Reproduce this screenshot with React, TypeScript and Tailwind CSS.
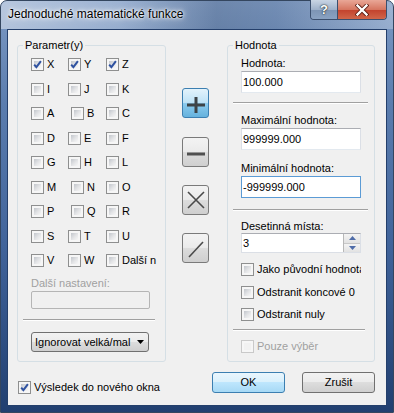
import React from 'react';

const Check = ({ checked = false, disabled = false }: { checked?: boolean; disabled?: boolean }) => (
  <span
    className={`relative flex h-[13px] w-[13px] shrink-0 border p-[2px] ${
      disabled ? 'border-[#c9c9c9] bg-[#f6f6f6]' : 'border-[#8e8f8f] bg-[#f6f6f6]'
    }`}
  >
    <span
      className={`block h-full w-full ${
        disabled ? 'bg-[#f1f1f1]' : 'bg-[linear-gradient(135deg,#c2c6cc_0%,#e4e5e7_55%,#f7f7f7_100%)]'
      }`}
    />
    {checked && (
      <svg className="absolute left-0 top-0" width="11" height="11" viewBox="0 0 11 11">
        <path d="M2.2 5.6 L4.4 8.2 L8.9 2.2" stroke="#2f52a0" strokeWidth="2" fill="none" />
      </svg>
    )}
  </span>
);

const Opt = ({ label, checked, shift }: { label: string; checked?: boolean; shift?: boolean }) => (
  <div className={`flex h-[13px] items-center gap-[3px] ${shift ? 'ml-[3px]' : ''}`}>
    <Check checked={checked} />
    <span className="whitespace-nowrap leading-[13px]">{label}</span>
  </div>
);

const TextBox = ({ value, focused }: { value: string; focused?: boolean }) => (
  <div
    className={`flex h-[22px] w-[120px] items-center border bg-white px-[1px] ${
      focused ? 'border-[#5b9bd5]' : 'border-[#dbdfe6] border-t-[#abadb3] border-b-[#e3e9ef]'
    }`}
  >
    {value}
  </div>
);

const Sep = ({ className }: { className: string }) => (
  <div className={`h-[2px] border-t border-b border-[#a0a0a0] border-b-white ${className}`} />
);

const ToolBtn = ({ hot, children }: { hot?: boolean; children: React.ReactNode }) => (
  <div
    className={`flex h-[30px] w-[27px] items-center justify-center rounded-[3px] border ${
      hot
        ? 'border-[#3c7fb1] bg-[linear-gradient(180deg,#e3f3fc_0%,#bfe3f7_48%,#8ccbee_52%,#66b2dd_100%)]'
        : 'border-[#7a7a7a] bg-[linear-gradient(180deg,#f3f3f3_0%,#ebebeb_48%,#dcdcdc_52%,#cfcfcf_100%)]'
    }`}
  >
    <svg width="27" height="30" viewBox="0 0 27 30" className="-m-px">
      {children}
    </svg>
  </div>
);

const Btn = ({ label, def }: { label: string; def?: boolean }) => (
  <div
    className={`flex h-[21px] w-[73px] items-center justify-center rounded-[3px] border ${
      def
        ? 'border-[#3c7fb1] bg-[linear-gradient(180deg,#eaf6fd_0%,#d9f0fc_50%,#bee6fd_50%,#a7d9f5_100%)]'
        : 'border-[#707070] bg-[linear-gradient(180deg,#f2f2f2_0%,#ebebeb_50%,#dddddd_50%,#cfcfcf_100%)]'
    }`}
  >
    {label}
  </div>
);

export default function App() {
  const rows: [string, boolean?, boolean?][][] = [
    [['X', true], ['Y', true], ['Z', true]],
    [['I'], ['J'], ['K']],
    [['A'], ['B', false, true], ['C']],
    [['D'], ['E'], ['F']],
    [['G'], ['H'], ['L']],
    [['M'], ['N', false, true], ['O']],
    [['P'], ['Q', false, true], ['R']],
    [['S'], ['T'], ['U']],
    [['V'], ['W'], ['Další n']],
  ];

  return (
    <div className="flex h-[413px] w-[394px] flex-col rounded-t-[7px] border border-[#34465f] bg-[linear-gradient(180deg,#7d9ac4_0%,#5b7dae_25%,#40639a_60%,#213f70_100%)] px-[6px] pb-[6px] font-['Liberation_Sans',Arial,sans-serif] text-[11px] text-black">
      {/* title bar */}
      <div className="-mx-[6px] flex h-[28px] rounded-t-[6px] bg-[linear-gradient(90deg,rgba(255,255,255,0.45)_0%,rgba(255,255,255,0.25)_30%,rgba(0,0,0,0.12)_55%,rgba(0,0,0,0.08)_70%,rgba(255,255,255,0.25)_100%)] px-[6px]">
        <span className="ml-[1px] mt-[6px] text-[12px] leading-[15px] [text-shadow:0_0_8px_#fff,0_0_4px_#fff,0_0_2px_#fff]">
          Jednoduché matematické funkce
        </span>
        <div className="-mt-px ml-auto flex h-[20px] overflow-hidden rounded-b-[4px] border border-t-0 border-[#3b4f6e]">
          <div className="flex w-[27px] items-center justify-center border-r border-[#3b4f6e] bg-[linear-gradient(180deg,#c9d5e4_0%,#9fb2cb_50%,#7d94b4_51%,#8aa2c2_100%)] text-[13px] font-bold text-white [text-shadow:0_0_2px_#233,0_0_1px_#000]">
            ?
          </div>
          <div className="flex w-[48px] items-center justify-center bg-[linear-gradient(180deg,#e9a797_0%,#d67661_50%,#c2412c_51%,#d0664a_100%)]">
            <svg width="14" height="12" viewBox="0 0 14 12">
              <path d="M2.5 1.5 L11.5 10.5 M11.5 1.5 L2.5 10.5" stroke="#5a1a10" strokeWidth="4" strokeLinecap="square" />
              <path d="M2.5 1.5 L11.5 10.5 M11.5 1.5 L2.5 10.5" stroke="#fff" strokeWidth="2.4" strokeLinecap="square" />
            </svg>
          </div>
        </div>
      </div>

      {/* client */}
      <div className="flex flex-1 flex-col border border-[#243f6b] bg-[#f0f0f0]">
        <div className="mt-[8px] flex">
          {/* parameters */}
          <fieldset className="ml-[9px] h-[324px] w-[149px] rounded-[3px] border border-[#d5dfe5]">
            <legend className="ml-[5px] px-[2px] leading-[14px]">Parametr(y)</legend>
            <div className="pl-[13px] pt-[6px]">
              <div className="grid grid-cols-[37px_38px_auto] gap-y-[11.5px]">
                {rows.flat().map(([l, c, s], i) => (
                  <Opt key={i} label={l} checked={c} shift={s} />
                ))}
              </div>
              <div className="mt-[9px] leading-[14px] text-[#a0a0a0]">Další nastavení:</div>
              <div className="mt-[1px] h-[18px] w-[119px] rounded-[2px] border border-[#b5b5b5] bg-[#f0f0f0]" />
              <Sep className="-ml-[8px] mt-[10px] w-[132px]" />
              <div className="mt-[11px] flex h-[20px] w-[118px] items-center rounded-[3px] border border-[#707070] bg-[linear-gradient(180deg,#f2f2f2_0%,#ebebeb_50%,#dddddd_50%,#cfcfcf_100%)] pl-[3px] pr-[4px]">
                <span className="flex-1 whitespace-nowrap">Ignorovat velká/mal</span>
                <svg width="7" height="4" viewBox="0 0 7 4" className="ml-[3px]">
                  <path d="M0 0 H7 L3.5 4 Z" fill="#000" />
                </svg>
              </div>
            </div>
          </fieldset>

          {/* tool buttons */}
          <div className="ml-[16px] mt-[50px] flex flex-col gap-[19px]">
            <ToolBtn hot>
              <path d="M5 17 H23 M14 9 V25" stroke="#3d4347" strokeWidth="3" />
            </ToolBtn>
            <ToolBtn>
              <path d="M5 17 H23" stroke="#505050" strokeWidth="3" />
            </ToolBtn>
            <div className="-mt-px">
              <ToolBtn>
                <path d="M6 7 L22 23 M22 7 L6 23" stroke="#4a4a4a" strokeWidth="1.6" />
              </ToolBtn>
            </div>
            <div className="-mt-px">
              <ToolBtn>
                <path d="M7 24 L21 9" stroke="#4a4a4a" strokeWidth="1.6" />
              </ToolBtn>
            </div>
          </div>

          {/* value */}
          <fieldset className="ml-[18px] h-[324px] w-[148px] rounded-[3px] border border-[#d5dfe5]">
            <legend className="ml-[5px] px-[2px] leading-[14px]">Hodnota</legend>
            <div className="pl-[13px] pt-[4px]">
              <div className="leading-[14px]">Hodnota:</div>
              <div className="mt-[1px]">
                <TextBox value="100.000" />
              </div>
              <Sep className="-ml-[8px] mt-[9px] w-[135px]" />
              <div className="mt-[9px] leading-[14px]">Maximální hodnota:</div>
              <div className="mt-[1px]">
                <TextBox value="999999.000" />
              </div>
              <div className="mt-[11px] leading-[14px]">Minimální hodnota:</div>
              <div className="mt-[1px]">
                <TextBox value="-999999.000" focused />
              </div>
              <Sep className="-ml-[8px] mt-[11px] w-[135px]" />
              <div className="mt-[8px] leading-[14px]">Desetinná místa:</div>
              <div className="flex h-[20px] w-[120px] items-center border border-[#dbdfe6] border-t-[#abadb3] bg-white pl-[1px]">
                <span className="flex-1">3</span>
                <div className="flex h-full w-[17px] flex-col border-l border-[#b8b8b8]">
                  <div className="flex flex-1 items-center justify-center border-b border-[#c8c8c8] bg-[linear-gradient(180deg,#f4f4f4,#e2e2e2)]">
                    <svg width="7" height="4" viewBox="0 0 7 4">
                      <path d="M0 4 H7 L3.5 0 Z" fill="#4f6ca8" />
                    </svg>
                  </div>
                  <div className="flex flex-1 items-center justify-center bg-[linear-gradient(180deg,#f4f4f4,#e2e2e2)]">
                    <svg width="7" height="4" viewBox="0 0 7 4">
                      <path d="M0 0 H7 L3.5 4 Z" fill="#4f6ca8" />
                    </svg>
                  </div>
                </div>
              </div>
              <div className="mt-[10px] flex h-[13px] items-center gap-[3px]">
                <Check />
                <span className="w-[104px] overflow-hidden whitespace-nowrap">Jako původní hodnota</span>
              </div>
              <div className="mt-[10px] flex h-[13px] items-center gap-[3px]">
                <Check />
                <span className="whitespace-nowrap">Odstranit koncové 0</span>
              </div>
              <div className="mt-[9px] flex h-[13px] items-center gap-[3px]">
                <Check />
                <span className="whitespace-nowrap">Odstranit nuly</span>
              </div>
              <Sep className="-ml-[8px] mt-[8px] w-[132px]" />
              <div className="mt-[9px] flex h-[13px] items-center gap-[3px] text-[#a0a0a0]">
                <Check disabled />
                <span className="whitespace-nowrap">Pouze výběr</span>
              </div>
            </div>
          </fieldset>
        </div>

        {/* bottom row */}
        <div className="mt-[10px] flex items-start">
          <div className="ml-[10px] mt-[9px] flex h-[13px] items-center gap-[3px]">
            <Check checked />
            <span className="whitespace-nowrap">Výsledek do nového okna</span>
          </div>
          <div className="ml-auto mr-[11px] flex gap-[17px]">
            <Btn label="OK" def />
            <Btn label="Zrušit" />
          </div>
        </div>
      </div>
    </div>
  );
}
